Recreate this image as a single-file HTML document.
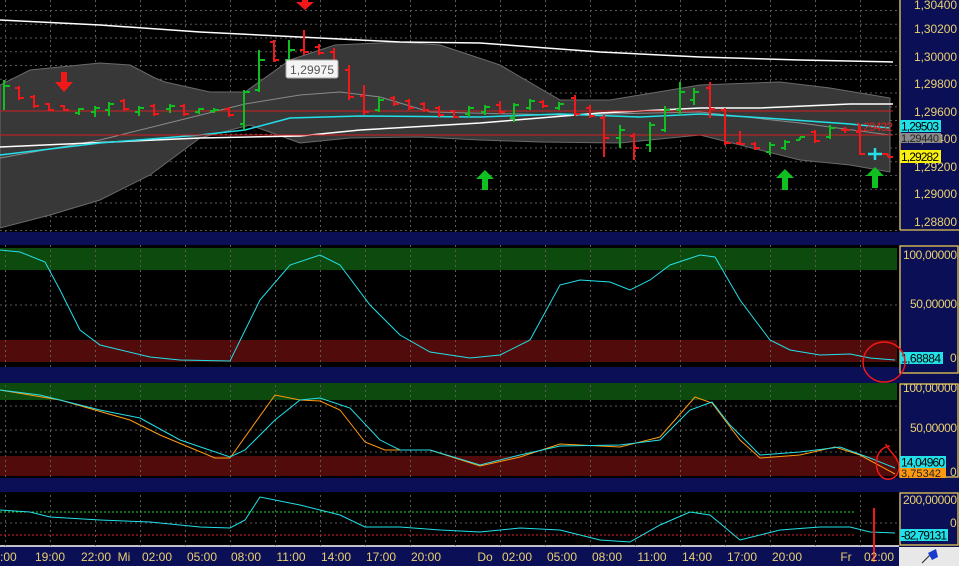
<!DOCTYPE html>
<html><head><meta charset="utf-8"><style>
html,body{margin:0;padding:0;background:#000;width:959px;height:566px;overflow:hidden}
svg{display:block;font-family:"Liberation Sans",sans-serif}
</style></head><body>
<svg width="959" height="566" viewBox="0 0 959 566" xmlns="http://www.w3.org/2000/svg">
<defs>
<pattern id="hg" width="5" height="13.75" patternUnits="userSpaceOnUse" y="10"><rect x="0" y="0" width="2" height="1" fill="#5a5a5a"/></pattern>
<pattern id="vg" width="45" height="5" patternUnits="userSpaceOnUse" x="5"><rect x="0" y="0" width="1" height="2" fill="#5a5a5a"/></pattern>
</defs>
<rect width="959" height="566" fill="#000"/>
<rect x="0" y="232" width="959" height="13" fill="#0b0f55"/>
<rect x="0" y="367" width="959" height="16" fill="#0b0f55"/>
<rect x="0" y="478" width="959" height="14" fill="#0b0f55"/>
<rect x="0" y="546" width="959" height="20" fill="#0b0f55"/>
<line x1="0" y1="546" x2="899" y2="546" stroke="#fff" stroke-width="1.5"/>
<rect x="899" y="0" width="60" height="232" fill="#0b0f55"/>
<rect x="899" y="245" width="60" height="122" fill="#0b0f55"/>
<rect x="899" y="383" width="60" height="95" fill="#0b0f55"/>
<rect x="899" y="492" width="60" height="54" fill="#0b0f55"/>
<g stroke="#e8c850" stroke-width="1.3" fill="none">
<line x1="900" y1="0" x2="900" y2="230"/><line x1="900" y1="230" x2="959" y2="230"/>
<rect x="900" y="246" width="58" height="127"/>
<rect x="900" y="384" width="58" height="93"/>
<rect x="900" y="493" width="58" height="52"/>
</g>
<rect x="899" y="547" width="60" height="19" fill="#e8e8e8"/>
<path d="M922 563 L934 551" stroke="#333" stroke-width="1.2"/><path d="M928 553 L936 549 L938 557 L932 560Z" fill="#1a3ad0"/>
<rect x="0" y="248" width="897" height="22" fill="#0d4a0d"/>
<rect x="0" y="340" width="897" height="22" fill="#520b0b"/>
<rect x="0" y="383" width="897" height="17" fill="#0d4a0d"/>
<rect x="0" y="456" width="897" height="20" fill="#520b0b"/>
<rect x="0" y="0" width="897" height="232" fill="url(#hg)"/>
<rect x="0" y="0" width="897" height="232" fill="url(#vg)"/>
<rect x="0" y="245" width="897" height="122" fill="url(#vg)"/>
<rect x="0" y="383" width="897" height="95" fill="url(#vg)"/>
<rect x="0" y="492" width="897" height="54" fill="url(#vg)"/>
<g stroke="#5a5a5a" stroke-dasharray="2 3"><line x1="0" y1="305" x2="897" y2="305"/><line x1="0" y1="406" x2="897" y2="406"/><line x1="0" y1="430" x2="897" y2="430"/><line x1="0" y1="452" x2="897" y2="452"/><line x1="0" y1="523" x2="897" y2="523"/></g>
<polygon points="0,85 30,70 100,63 130,65 155,78 165,82 210,92 245,92 290,60 335,45 400,42 440,45 500,65 560,100 610,100 700,85 780,82 830,88 890,98 890,172 850,165 800,160 720,140 700,135 620,143 540,142 480,140 420,137 350,138 300,143 250,125 200,138 150,175 100,200 50,215 0,228" fill="#383838" stroke="#6a6a6a"/>
<polyline points="0,158 100,140 245,104 300,95 340,92 380,97 430,112 560,115 700,112 800,123 890,135" fill="none" stroke="#8a8a8a"/>
<polyline points="0,20 100,25 200,32 300,37 400,42 480,43 600,52 700,57 800,60 893,62" fill="none" stroke="#fff" stroke-width="1.5"/>
<polyline points="0,147 200,138 300,136 360,130 480,123 600,113 700,108 760,108 850,104 893,104" fill="none" stroke="#fff" stroke-width="1.5"/>
<polyline points="0,155 100,143 200,135 245,130 290,118 360,116 480,117 560,114 640,117 700,114 750,117 780,119 850,124 890,128" fill="none" stroke="#22e0e8" stroke-width="1.5"/>
<line x1="0" y1="111" x2="893" y2="111" stroke="#d02020"/>
<line x1="0" y1="135" x2="893" y2="135" stroke="#d02020"/>
<g stroke="#10c020" stroke-width="2" fill="none">
<path d="M4 80V110M4 86h6M79 108V115M75 113h4M79 109h5M95 106V117M91 112h4M95 108h5M109 102V116M105 110h4M109 104h5M139 106V116M135 112h4M139 108h5M170 104V113M166 109h4M170 106h5M199 108V114M195 112h4M199 109h5M214 108V113M210 111h4M214 110h5M244 90V130M240 124h4M244 92h6M259 50V92M255 90h4M259 60h6M289 40V62M285 60h4M289 50h6M379 97V112M375 110h4M379 100h5M469 106V117M465 114h4M469 108h5M485 105V115M481 112h4M485 107h5M514 103V122M510 118h4M514 105h5M530 99V110M526 108h4M530 101h5M559 102V110M555 108h4M559 104h5M620 125V148M616 138h4M620 130h5M650 122V152M646 145h4M650 125h5M665 106V132M661 130h4M665 110h5M680 82V115M676 110h4M680 92h5M694 88V105M690 100h4M694 92h5M770 142V155M766 152h4M770 145h5M785 140V150M781 148h4M785 142h5M800 137V140M796 140h4M800 137h5M830 125V139M826 137h4M830 128h5"/>
</g>
<g stroke="#f01818" stroke-width="2" fill="none">
<path d="M19 86V100M15 88h4M19 98h5M34 95V108M30 97h4M34 106h5M49 103V111M45 104h4M49 110h5M64 105V111M60 106h4M64 110h5M124 99V111M120 101h4M124 109h5M154 104V116M150 106h4M154 114h5M184 104V116M180 106h4M184 114h5M229 107V117M225 109h4M229 115h5M274 40V62M270 42h4M274 60h5M304 30V55M300 50h4M304 52h5M319 44V55M315 47h4M319 53h5M334 48V70M330 52h4M334 68h5M349 65V100M345 70h4M349 97h5M364 85V115M360 96h4M364 112h5M394 96V106M390 98h4M394 104h5M409 99V110M405 101h4M409 108h5M424 102V112M420 104h4M424 110h5M439 106V117M435 108h4M439 115h5M454 110V118M450 111h4M454 117h5M500 101V114M496 105h4M500 112h5M543 100V108M539 102h4M543 106h5M575 95V116M571 98h4M575 114h5M590 105V118M586 108h4M590 116h5M604 115V157M600 118h4M604 138h5M634 133V160M630 136h4M634 148h5M710 82V118M706 88h4M710 109h5M725 108V145M721 110h4M725 143h6M740 131V145M736 143h4M740 144h5M755 142V150M751 144h4M755 148h5M815 130V143M811 132h4M815 141h5M845 127V133M841 130h4M845 130h5M860 124V155M856 132h4M860 154h5M888 154V157M882 154h6M888 157h5"/>
</g>
<path d="M868 154h14M875 148v12" stroke="#22e0e8" stroke-width="2.5"/>
<path d="M61 72h6v10h6l-9 10-9-10h6z" fill="#f01818"/>
<path d="M302 0h6v2h6l-9 8-9-8h6z" fill="#f01818"/>
<path d="M485 170l9 9h-6v11h-6v-11h-6z" fill="#10c020"/>
<path d="M785 169l9 9h-6v12h-6v-12h-6z" fill="#10c020"/>
<path d="M875 167l9 9h-6v12h-6v-12h-6z" fill="#10c020"/>
<rect x="286" y="60" width="52" height="18" rx="2" fill="#f4f4f4" stroke="#aaa"/>
<text x="290" y="74" font-size="12" fill="#555" textLength="44">1,29975</text>
<text x="855" y="131" font-size="12" fill="#e02020" textLength="38">1,29432</text>
<g font-size="12" fill="#e8d070">
<text x="914" y="9" textLength="43">1,30400</text><text x="914" y="33" textLength="43">1,30200</text><text x="914" y="61" textLength="43">1,30000</text><text x="914" y="88" textLength="43">1,29800</text><text x="914" y="116" textLength="43">1,29600</text><text x="914" y="143" textLength="43">1,29400</text><text x="914" y="171" textLength="43">1,29200</text><text x="914" y="198" textLength="43">1,29000</text><text x="914" y="226" textLength="43">1,28800</text>
</g>
<rect x="900" y="120" width="41" height="12" fill="#22e0e8"/><text x="901" y="130.5" font-size="12" fill="#000" textLength="38">1,29503</text>
<rect x="900" y="133" width="41" height="10" fill="#8a8a8a"/><text x="901" y="142" font-size="11" fill="#222" textLength="38">1,29440</text>
<rect x="900" y="150" width="41" height="13" fill="#f8f010"/><text x="901" y="161" font-size="12" fill="#000" textLength="38">1,29282</text>
<polyline points="0,250 20,252 45,262 60,290 80,330 100,345 150,357 180,360 230,361 260,300 290,265 320,255 340,265 370,305 400,335 430,352 470,358 500,355 530,340 560,285 580,280 610,282 630,290 650,280 670,265 700,255 715,257 740,300 770,340 790,350 820,355 850,354 870,358 895,360" fill="none" stroke="#22e0e8"/>
<g font-size="12" fill="#e8d070">
<text x="903" y="259" textLength="54">100,00000</text><text x="910" y="308" textLength="47">50,00000</text><text x="950" y="362">0</text>
<text x="903" y="392" textLength="54">100,00000</text><text x="910" y="432" textLength="47">50,00000</text><text x="950" y="476">0</text>
<text x="903" y="504" textLength="54">200,00000</text><text x="950" y="527">0</text>
</g>
<rect x="900" y="352" width="43" height="12" fill="#22e0e8"/><text x="901" y="362.5" font-size="12" fill="#000" textLength="40">1,68884</text>
<ellipse cx="884" cy="362" rx="21" ry="20" fill="none" stroke="#f01818" stroke-width="1.5"/>
<polyline points="0,390 60,400 130,420 160,435 215,458 230,458 275,395 300,400 320,401 340,410 365,442 385,450 430,450 480,466 520,457 560,444 620,447 660,437 695,397 712,403 740,440 760,458 800,455 835,447 860,455 895,474" fill="none" stroke="#ff9a10"/>
<polyline points="0,390 40,395 100,410 140,418 180,440 230,457 245,450 275,420 300,400 320,398 350,408 380,440 400,450 430,450 480,465 520,455 560,446 620,445 660,440 690,410 712,402 730,425 760,455 800,452 840,447 870,458 895,468" fill="none" stroke="#22e0e8"/>
<rect x="900" y="456" width="46" height="12" fill="#22e0e8"/><text x="901" y="466.5" font-size="12" fill="#000" textLength="44">14,04960</text>
<rect x="900" y="468" width="46" height="10" fill="#ff9a10"/><text x="901" y="477" font-size="11" fill="#222" textLength="40">3,75342</text>
<path d="M890 446 C872 448 873 476 886 479 C896 481 903 470 896 458 C892 452 886 447 886 444" fill="none" stroke="#f01818" stroke-width="1.5"/>
<line x1="0" y1="512" x2="855" y2="512" stroke="#20e020" stroke-dasharray="2 2"/>
<line x1="0" y1="535" x2="855" y2="535" stroke="#e02020" stroke-dasharray="2 2"/>
<polyline points="0,510 30,512 50,517 100,520 150,522 200,527 230,528 245,520 260,497 300,505 340,515 365,527 400,527 440,530 480,532 520,528 560,530 600,540 630,542 660,525 690,512 710,515 740,540 780,530 820,527 850,527 870,532 895,533" fill="none" stroke="#22e0e8"/>
<rect x="900" y="529" width="48" height="12" fill="#22e0e8"/><text x="901" y="539.5" font-size="12" fill="#000" textLength="46">-82,79131</text>
<line x1="874" y1="508" x2="874" y2="562" stroke="#f01818" stroke-width="2"/>
<g font-size="12" fill="#e8d070" text-anchor="middle">
<text x="5" y="561">6:00</text><text x="50" y="561">19:00</text><text x="96" y="561">22:00</text><text x="124" y="561">Mi</text><text x="157" y="561">02:00</text><text x="202" y="561">05:00</text><text x="246" y="561">08:00</text><text x="291" y="561">11:00</text><text x="336" y="561">14:00</text><text x="381" y="561">17:00</text><text x="426" y="561">20:00</text><text x="485" y="561">Do</text><text x="517" y="561">02:00</text><text x="562" y="561">05:00</text><text x="607" y="561">08:00</text><text x="652" y="561">11:00</text><text x="697" y="561">14:00</text><text x="742" y="561">17:00</text><text x="787" y="561">20:00</text><text x="846" y="561">Fr</text><text x="879" y="561">02:00</text>
</g>
</svg>
</body></html>
